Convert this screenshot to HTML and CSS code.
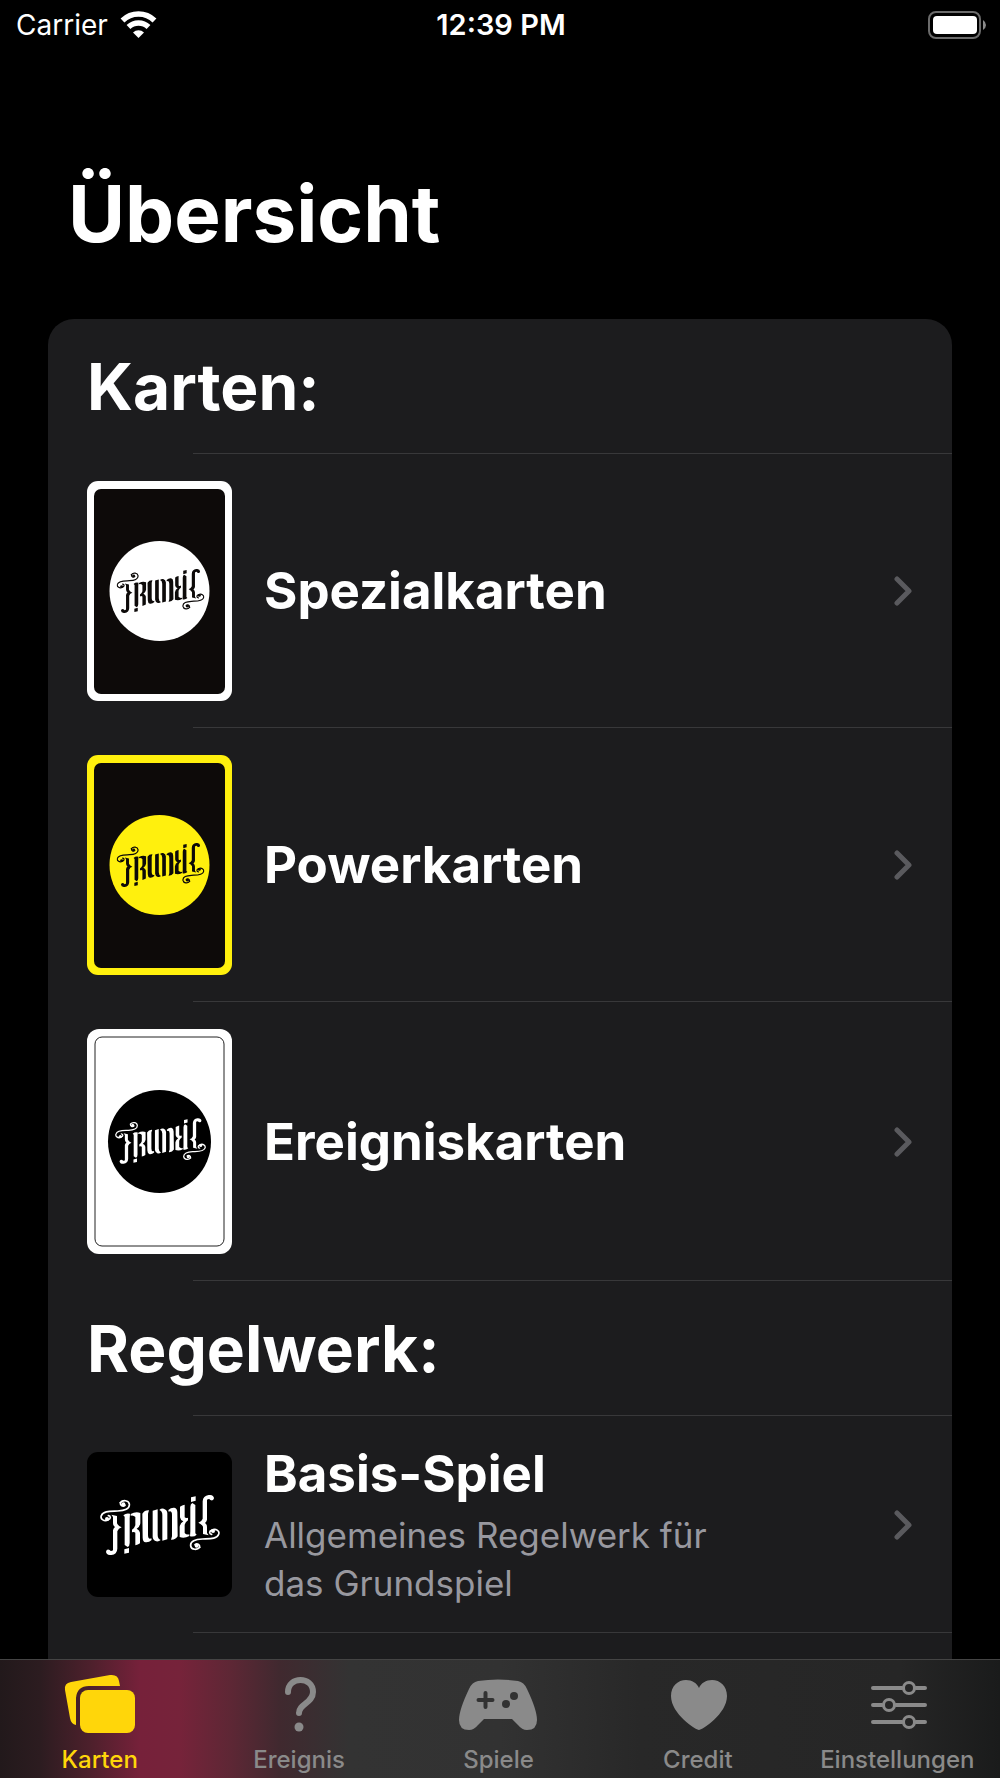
FILE: index.html
```html
<!DOCTYPE html>
<html lang="de">
<head>
<meta charset="utf-8">
<meta name="viewport" content="width=device-width, initial-scale=1">
<title>Übersicht</title>
<link rel="stylesheet" href="styles.css">
</head>
<body>
<svg class="defs" aria-hidden="true">
  <symbol id="logo" viewBox="59 164 360 180">
    <g id="logo-half" fill="none" stroke="currentColor" stroke-linecap="round" stroke-linejoin="round">
      <path stroke-width="5" d="M84 238C72 246 59 236 63 226C68 211 92 213 112 212C132 211 149 206 147 191C145 179 127 178 120 187"/>
      <path stroke-width="5" d="M84 238C92 236 92 227 84 226M120 187C119 196 128 200 134 195"/>
      <circle cx="80" cy="236" r="6" fill="currentColor" stroke="none"/>
      <circle cx="129" cy="192" r="6" fill="currentColor" stroke="none"/>
      <path fill="currentColor" stroke="none" d="M93 223L110 227V249Q114 257 124 261Q114 264 111 273V325Q110 342 93 344Q78 345 77 334Q79 325 88 329Q91 335 98 330V270Q99 264 104 260Q98 256 98 248V230Z"/>
      <path fill="currentColor" stroke="none" d="M129 225Q137 217 149 220L148 235V308Q148 317 142 320L133 314V229Z"/>
      <path fill="currentColor" stroke="none" d="M132 327L146 323V337L132 340Z"/>
      <path fill="currentColor" stroke="none" d="M151 221Q166 213 180 218V249Q178 260 169 265Q178 269 179 277V309Q173 313 165 315V277Q161 273 155 276V268Q163 263 165 255V230Q160 224 151 226Z"/>
      <path fill="currentColor" stroke="none" d="M186 220Q193 209 206 210L203 220V284Q203 298 213 294L214 299Q206 307 196 306Q187 304 187 292Z"/>
      <path fill="currentColor" stroke="none" d="M217 211L232 207V284Q232 296 241 299Q236 304 228 303Q218 300 217 290Z"/>
    </g>
    <use href="#logo-half" transform="rotate(180 239 254)"/>
  </symbol>
  <symbol id="chevron" viewBox="0 0 18 30">
    <path d="M3 3L15 15L3 27" fill="none" stroke="currentColor" stroke-width="5" stroke-linecap="round" stroke-linejoin="round"/>
  </symbol>
</svg>

<div class="app">
  <header class="status">
    <div class="carrier">
      <span>Carrier</span>
      <svg width="37" height="28" viewBox="0 0 37 28" aria-hidden="true">
        <g fill="none" stroke="#fff" stroke-width="5.500">
          <path d="M2.500 9.500A23 23 0 0 1 34.500 9.500"/>
          <path d="M8.500 16A14.500 14.500 0 0 1 28.500 16"/>
        </g>
        <path d="M13 21.500A8 8 0 0 1 24 21.500L18.500 27Z" fill="#fff"/>
      </svg>
    </div>
    <time>12:39 PM</time>
    <svg class="battery" width="60" height="28" viewBox="0 0 60 28" aria-hidden="true">
      <rect x="3" y="1" width="51" height="26" rx="7" fill="none" stroke="#6b6b6b" stroke-width="2"/>
      <rect x="7" y="5" width="44" height="18" rx="4" fill="#fff"/>
      <path d="M57 9Q60 11 60 14T57 19Z" fill="#8a8a8a"/>
    </svg>
  </header>

  <main>
    <h1>Übersicht</h1>
    <div class="list">
      <h2 class="divided">Karten:</h2>
      <a class="row divided" href="#spezialkarten">
        <svg class="art" width="145" height="220" viewBox="0 0 145 220" aria-hidden="true">
          <rect width="145" height="220" rx="11" fill="#fff"/>
          <rect x="7" y="8" width="131" height="205" rx="7" fill="#0d0a09"/>
          <circle cx="72.500" cy="110" r="50" fill="#fff"/>
          <use href="#logo" x="29.500" y="88" width="88" height="44" color="#0d0a09"/>
        </svg>
        <h3>Spezialkarten</h3>
        <svg class="chevron" aria-hidden="true"><use href="#chevron"/></svg>
      </a>
      <a class="row divided" href="#powerkarten">
        <svg class="art" width="145" height="220" viewBox="0 0 145 220" aria-hidden="true">
          <rect width="145" height="220" rx="11" fill="#fff00d"/>
          <rect x="7" y="8" width="131" height="205" rx="7" fill="#0d0a09"/>
          <circle cx="72.500" cy="110" r="50" fill="#fff00d"/>
          <use href="#logo" x="29.500" y="88" width="88" height="44" color="#0d0a09"/>
        </svg>
        <h3>Powerkarten</h3>
        <svg class="chevron" aria-hidden="true"><use href="#chevron"/></svg>
      </a>
      <a class="row divided" href="#ereigniskarten">
        <svg class="art" width="145" height="225" viewBox="0 0 145 225" aria-hidden="true">
          <rect width="145" height="225" rx="12" fill="#fff"/>
          <rect x="8" y="8" width="129" height="209" rx="7" fill="none" stroke="#222"/>
          <circle cx="72.500" cy="112.500" r="51.500" fill="#000"/>
          <use href="#logo" x="28" y="89" width="91" height="46" color="#fff"/>
        </svg>
        <h3>Ereigniskarten</h3>
        <svg class="chevron" aria-hidden="true"><use href="#chevron"/></svg>
      </a>
      <h2 class="divided">Regelwerk:</h2>
      <a class="row rule divided" href="#basis-spiel">
        <svg class="art" width="145" height="145" viewBox="0 0 145 145" aria-hidden="true">
          <rect width="145" height="145" rx="11" fill="#000"/>
          <use href="#logo" x="13" y="43" width="120" height="60" color="#fff"/>
        </svg>
        <div class="copy">
          <h3>Basis-Spiel</h3>
          <p>Allgemeines Regelwerk für das Grundspiel</p>
        </div>
        <svg class="chevron" aria-hidden="true"><use href="#chevron"/></svg>
      </a>
    </div>
  </main>

  <nav class="tabs">
    <a class="active" href="#karten" aria-current="page">
      <svg width="72" height="60" viewBox="0 0 72 60" aria-hidden="true">
        <path fill="currentColor" d="M1 16Q0 9 7 8L46 1Q54 0 55 7L56 12H25Q13 12 12 24V51Q7 50 6 44Z"/>
        <rect x="16" y="16" width="55" height="43" rx="8" fill="currentColor"/>
      </svg>
      <span>Karten</span>
    </a>
    <a href="#ereignis">
      <svg width="72" height="60" viewBox="0 0 72 60" aria-hidden="true">
        <path d="M25 18C25 2 50 2 50 18C50 29 36 30 36 39" fill="none" stroke="currentColor" stroke-width="6" stroke-linecap="round"/>
        <circle cx="36" cy="53" r="4.500" fill="currentColor"/>
      </svg>
      <span>Ereignis</span>
    </a>
    <a href="#spiele">
      <svg width="80" height="60" viewBox="0 0 80 60" aria-hidden="true">
        <path fill="currentColor" d="M20 7Q40 4 60 7Q66 8 69 15Q79 36 79 46Q79 56 69 56Q64 56 60 51L54 45H26L20 51Q16 56 11 56Q1 56 1 46Q1 36 11 15Q14 8 20 7Z"/>
        <path d="M20.500 26H34.500M27.500 19V33" stroke="#323232" stroke-width="4" stroke-linecap="round"/>
        <circle cx="48" cy="30" r="4" fill="#323232"/>
        <circle cx="56" cy="22" r="4" fill="#323232"/>
      </svg>
      <span>Spiele</span>
    </a>
    <a href="#credit">
      <svg width="72" height="60" viewBox="0 0 72 60" aria-hidden="true">
        <path fill="currentColor" d="M37 56C34 56 9 40 9 22C9 12 16 6 24 6C30 6 35 9 37 14C39 9 44 6 50 6C58 6 65 12 65 22C65 40 40 56 37 56Z"/>
      </svg>
      <span>Credit</span>
    </a>
    <a href="#einstellungen">
      <svg width="72" height="60" viewBox="0 0 72 60" aria-hidden="true">
        <g fill="none" stroke="currentColor" stroke-width="4" stroke-linecap="round">
          <path d="M12 14H41M55 14H64M12 31H21M35 31H64M12 48H41M55 48H64"/>
          <circle cx="48" cy="14" r="5.500" stroke-width="3"/>
          <circle cx="28" cy="31" r="5.500" stroke-width="3"/>
          <circle cx="48" cy="48" r="5.500" stroke-width="3"/>
        </g>
      </svg>
      <span>Einstellungen</span>
    </a>
  </nav>
</div>
</body>
</html>
```
FILE: styles.css
```css
* {
  box-sizing: border-box;
}

body {
  margin: 0;
  background: #000;
  color: #fff;
  font-family: Inter, "Liberation Sans", sans-serif;
}

h1, h2, h3, p {
  margin: 0;
}

a {
  color: inherit;
  text-decoration: none;
}

svg {
  display: block;
  flex: none;
}

.defs {
  display: none;
}

.app {
  display: flex;
  flex-direction: column;
  min-height: 100vh;
}

.status {
  display: grid;
  grid-template-columns: 1fr auto 1fr;
  align-items: center;
  height: 50px;
  padding: 0 14px 0 16px;
  font-size: 28px;
  line-height: 34px;
}

.carrier {
  display: flex;
  align-items: center;
  gap: 12px;
}

.status time {
  font-size: 29px;
  font-weight: 600;
}

.battery {
  justify-self: end;
}

main {
  flex: 1;
  display: flex;
  flex-direction: column;
  padding: 114px 48px 0;
}

h1 {
  padding: 0 20px;
  margin-bottom: 55px;
  font-size: 78px;
  line-height: 100px;
  font-weight: 700;
}

.list {
  flex: 1;
  border-radius: 26px 26px 0 0;
  background: #1c1c1e;
}

.divided {
  background: linear-gradient(#38383a, #38383a) 145px 100% / 100% 1px no-repeat;
}

h2 {
  padding: 28px 39px 27px;
  font-size: 64px;
  line-height: 80px;
  font-weight: 700;
}

.row {
  display: flex;
  align-items: center;
  gap: 32px;
  padding: 27px 40px 27px 39px;
}

.rule {
  padding-top: 26px;
  padding-bottom: 26px;
}

h3 {
  flex: 1;
  font-size: 51px;
  line-height: 64px;
  font-weight: 700;
}

.copy {
  flex: 1;
  display: flex;
  flex-direction: column;
  gap: 5px;
}

.copy p {
  max-width: 480px;
  color: #98989f;
  font-size: 35px;
  line-height: 48px;
}

.chevron {
  width: 18px;
  height: 30px;
  color: #5a5a5e;
}

.tabs {
  display: grid;
  grid-template-columns: repeat(5, 1fr);
  height: 119px;
  padding: 14px 3px 0 0;
  border-top: 1px solid #444;
  background: linear-gradient(90deg, #22191b 0%, #2c1c20 4%, #4d202c 9%, #76213a 14%, #76233a 18%, #5e2735 23%, #40292f 28%, #333 35%, #323232 50%, #282828 64%, #262626 90%, #1a1b1b 100%);
  color: #8a8a8a;
}

.tabs a {
  display: flex;
  flex-direction: column;
  align-items: center;
  gap: 12px;
  font-size: 24px;
  line-height: 28px;
  font-weight: 500;
}

.tabs .active {
  color: #ffd60a;
}
```
